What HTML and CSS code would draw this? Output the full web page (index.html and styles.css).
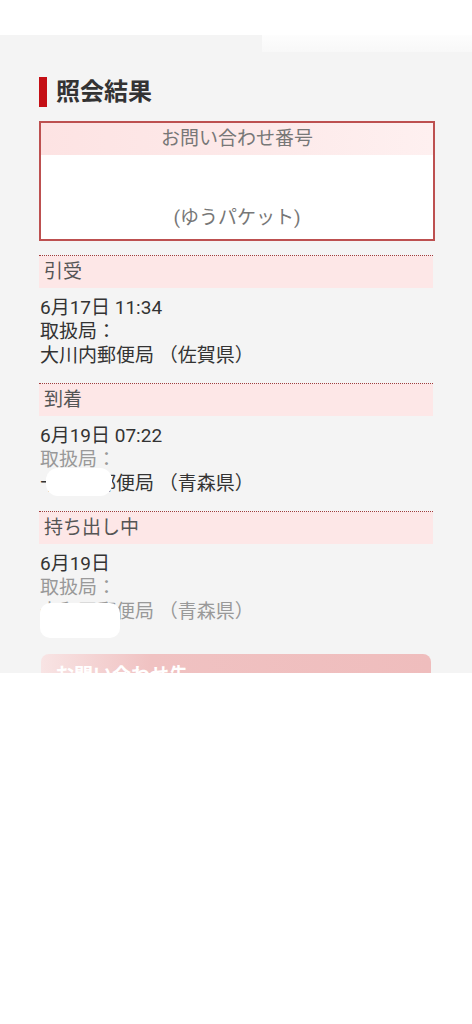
FILE: index.html
```html
<!DOCTYPE html>
<html lang="ja">
<head>
    <meta charset="UTF-8">
    <meta name="viewport" content="width=device-width, initial-scale=1.0">
    <title>照会結果</title>
    <link rel="stylesheet" href="styles.css">
</head>
<body>
<div class="page">
    <!-- 見出し -->
    <h1 class="title">照会結果</h1>

    <!-- お問い合わせ番号 -->
    <div class="number-box">
        <div class="number-head">お問い合わせ番号</div>
        <div class="number-body">
            <p class="number-kind">(ゆうパケット)</p>
        </div>
    </div>

    <!-- 履歴 -->
    <div class="event">
        <div class="event-head">引受</div>
        <div class="event-body">
            <p>6月17日 11:34</p>
            <p>取扱局：</p>
            <p>大川内郵便局 （佐賀県）</p>
        </div>
    </div>

    <div class="event">
        <div class="event-head">到着</div>
        <div class="event-body">
            <p>6月19日 07:22</p>
            <p class="muted">取扱局：</p>
            <p>十和田郵便局 （青森県）</p>
        </div>
    </div>

    <div class="event">
        <div class="event-head">持ち出し中</div>
        <div class="event-body">
            <p>6月19日</p>
            <p class="muted">取扱局：</p>
            <p class="muted">十和田郵便局 （青森県）</p>
        </div>
    </div>

    <a class="contact-btn" href="#">お問い合わせ先</a>
</div>

<!-- 塗りつぶし部分 -->
<div class="mask mask-top"></div>
<div class="mask mask-top-right"></div>
<div class="mask mask-office1"></div>
<div class="mask mask-office2"></div>
<div class="mask mask-bottom"></div>
</body>
</html>
```

FILE: styles.css
```css
/* ページ全体 */
body {
    margin: 0;
    padding: 0;
    height: 1024px;
    overflow: hidden;
    background-color: #f4f4f4;
    font-family: Roboto, "Noto Sans CJK JP", sans-serif;
    color: #333;
}

.page {
    padding: 77px 37px 0 39px;
}

p {
    margin: 0;
}

/* 見出し */
.title {
    margin: 0 0 14px 0;
    height: 30px;
    line-height: 30px;
    padding-left: 9px;
    border-left: 8px solid #c40f15;
    font-size: 24px;
    font-weight: bold;
    color: #333;
}

/* お問い合わせ番号の枠 */
.number-box {
    border: 2px solid #bd5050;
    background-color: #fff;
    text-align: center;
}

.number-head {
    height: 32px;
    line-height: 32px;
    font-size: 19px;
    color: #777;
    background: linear-gradient(to right, #fde3e3, #fdeaea 60%, #fef0f0);
}

.number-body {
    height: 84px;
    box-sizing: border-box;
    padding-top: 48px;
}

.number-kind {
    line-height: 30px;
    font-size: 19px;
    color: #777;
}

/* 履歴 */
.event {
    margin: 14px 2px 0 0;
    border-top: 1px dotted #a33a3a;
}

.event + .event {
    margin-top: 0;
}

.event-head {
    height: 32px;
    line-height: 32px;
    padding-left: 5px;
    font-size: 19px;
    color: #555;
    background-color: #fde7e7;
}

.event-body {
    padding: 8px 0 15px 1px;
    line-height: 24px;
    font-size: 19px;
    color: #333;
}

.muted {
    color: #999;
}

/* お問い合わせ先ボタン */
.contact-btn {
    display: block;
    margin: 15px 4px 0 2px;
    height: 44px;
    line-height: 44px;
    padding-left: 14px;
    border-radius: 8px;
    background: linear-gradient(to right, #f8e4e4, #f0c2c2 28%, #efbdbd);
    color: #fff;
    font-size: 19px;
    font-weight: bold;
    text-decoration: none;
}

/* 画像の塗りつぶし（上に重ねる） */
.mask {
    position: absolute;
    background-color: #fff;
}

.mask-top {
    top: 0;
    left: 0;
    width: 100%;
    height: 35px;
}

.mask-top-right {
    top: 35px;
    left: 262px;
    width: 210px;
    height: 17px;
    background: linear-gradient(#fdfdfd, #f8f8f8);
}

.mask-office1 {
    top: 468px;
    left: 46px;
    width: 66px;
    height: 28px;
    border-radius: 12px;
}

.mask-office2 {
    top: 603px;
    left: 40px;
    width: 80px;
    height: 35px;
    border-radius: 10px;
}

.mask-bottom {
    top: 673px;
    left: 0;
    width: 100%;
    height: 360px;
}
```
